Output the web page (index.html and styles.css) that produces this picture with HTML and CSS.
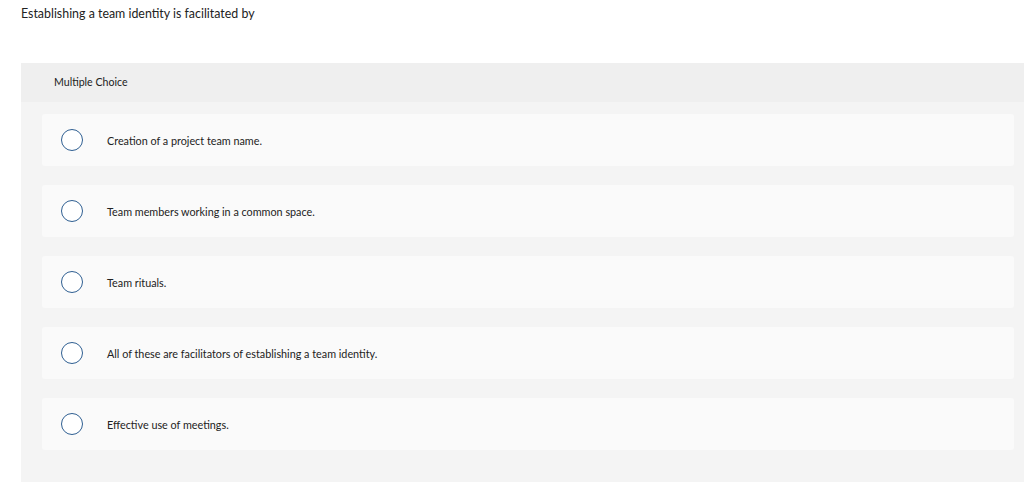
FILE: index.html
```html
<!DOCTYPE html>
<html>
<head>
<meta charset="utf-8">
<link rel="stylesheet" href="styles.css">
</head>
<body>
<div class="question">Establishing a team identity is facilitated by</div>
<div class="panel">
  <div class="panel-header">Multiple Choice</div>
  <div class="options">
    <div class="option"><span class="radio"></span><span class="label">Creation of a project team name.</span></div>
    <div class="option"><span class="radio"></span><span class="label">Team members working in a common space.</span></div>
    <div class="option"><span class="radio"></span><span class="label">Team rituals.</span></div>
    <div class="option"><span class="radio"></span><span class="label">All of these are facilitators of establishing a team identity.</span></div>
    <div class="option"><span class="radio"></span><span class="label">Effective use of meetings.</span></div>
  </div>
</div>
</body>
</html>
```
FILE: styles.css
```css
html, body {
  margin: 0;
  padding: 0;
  background: #ffffff;
  font-family: Lato, "Liberation Sans", sans-serif;
  color: #222;
}
.question {
  padding: 6px 0 0 21px;
  height: 63px;
  box-sizing: border-box;
  font-size: 12.4px;
  line-height: 16px;
}
.panel {
  margin-left: 21px;
  background: #f4f4f4;
  height: 419px;
}
.panel-header {
  background: #efefef;
  height: 39px;
  box-sizing: border-box;
  padding: 12px 0 0 33px;
  font-size: 10.6px;
  line-height: 14px;
}
.options {
  display: flex;
  flex-direction: column;
  gap: 19px;
  padding: 12px 10px 0 21px;
}
.option {
  background: #fafafa;
  border-radius: 3px;
  height: 52px;
  display: flex;
  align-items: center;
  padding-left: 19px;
}
.radio {
  width: 20px;
  height: 20px;
  border: 1px solid #2f5f92;
  border-radius: 50%;
  background: #fff;
  flex: none;
}
.label {
  margin-left: 24px;
  font-size: 10.8px;
  color: #222;
}
```
